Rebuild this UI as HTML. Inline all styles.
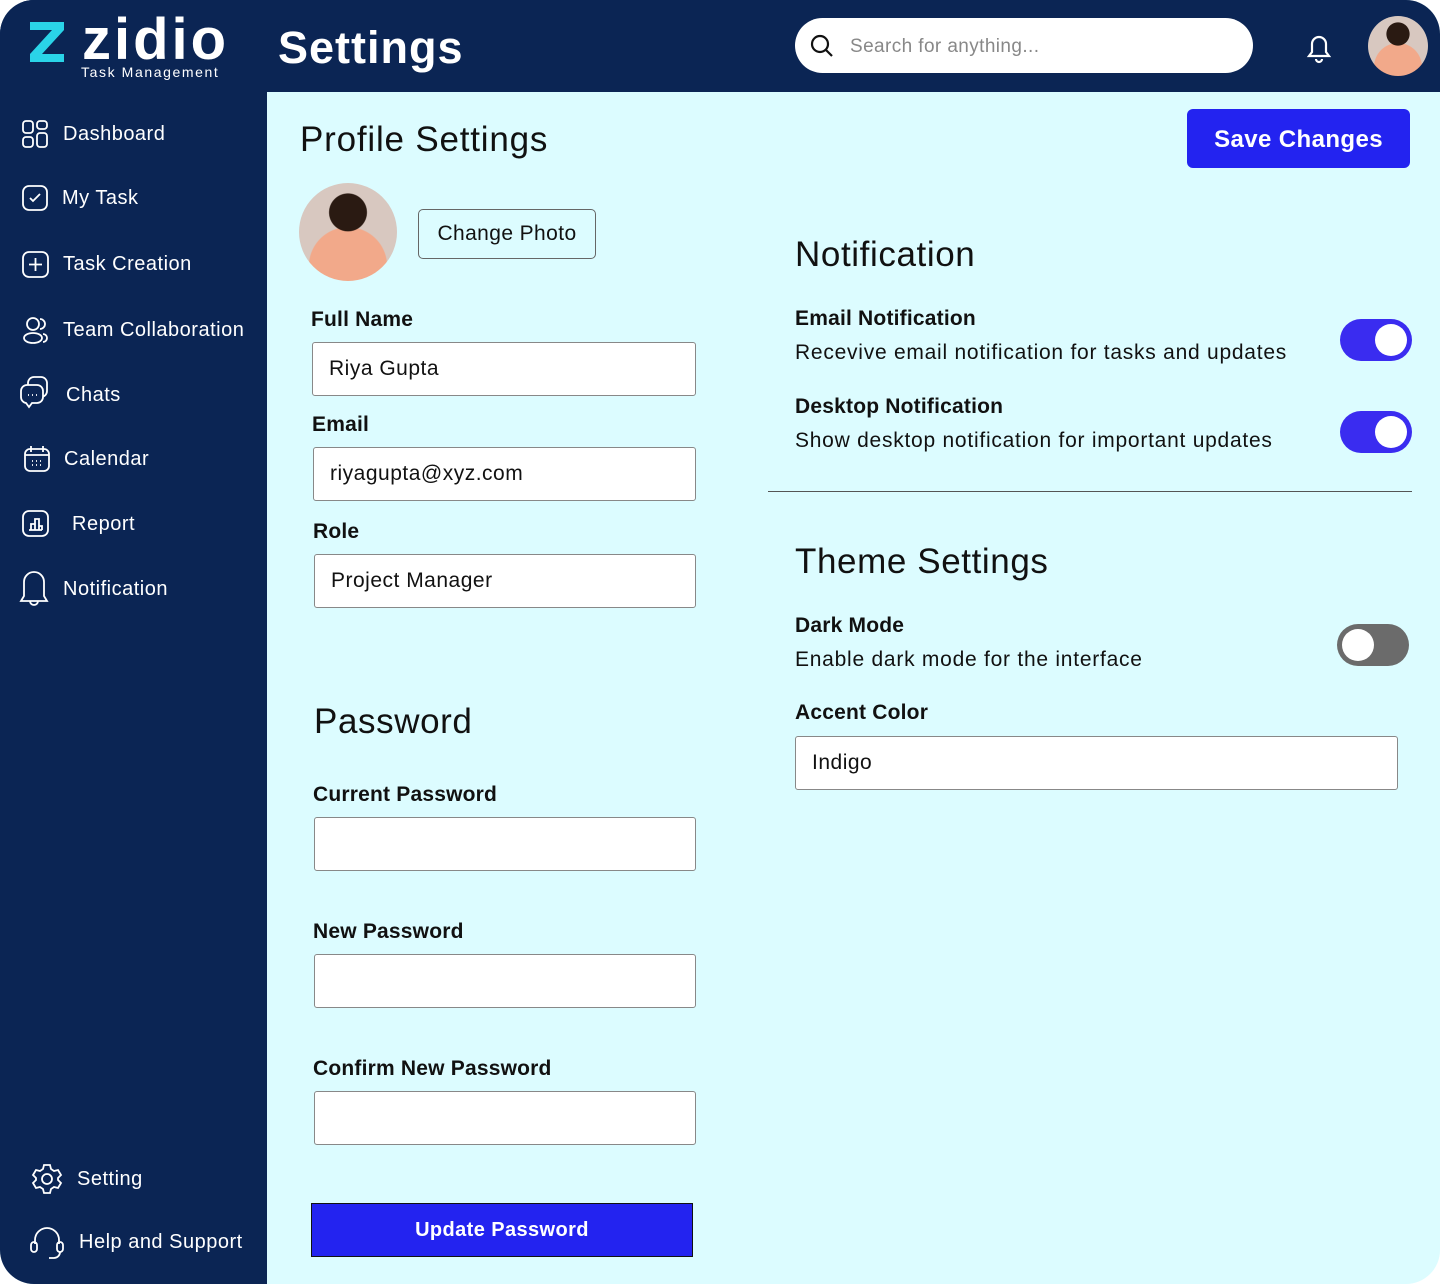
<!DOCTYPE html>
<html><head><style>
*{box-sizing:border-box;margin:0;padding:0}
body{width:1440px;height:1284px;background:#fff;font-family:"Liberation Sans",sans-serif;overflow:hidden;letter-spacing:0.4px}
.frame{position:absolute;left:0;top:0;width:1440px;height:1284px;border-radius:34px;overflow:hidden;background:#dcfcff}
.top{position:absolute;left:0;top:0;width:1440px;height:92px;background:#0b2554}
.side{position:absolute;left:0;top:0;width:267px;height:1284px;background:#0b2554}
.nav{position:absolute;color:#fff;font-size:20px;display:flex;align-items:center;letter-spacing:0.5px}
.nav svg{margin-right:14px}
.abs{position:absolute}
.lbl{position:absolute;font-size:21px;font-weight:bold;color:#111;letter-spacing:0.2px}
.inp{position:absolute;background:#fff;border:1px solid #888;border-radius:3px;font-size:21px;color:#111;padding-left:16px;display:flex;align-items:center;letter-spacing:0.5px}
h2{position:absolute;font-weight:normal;font-size:35px;color:#111;letter-spacing:0.6px}
.tog{position:absolute;width:72px;height:42px;border-radius:21px;background:#3a2cf0}
.tog::after{content:"";position:absolute;top:5px;right:5px;width:32px;height:32px;border-radius:50%;background:#fff}
.tog.off{background:#6b6b6b}
.tog.off::after{left:5px;right:auto}
.txt{position:absolute;font-size:21px;color:#111;letter-spacing:0.75px}
.av{border-radius:50%;background:radial-gradient(circle at 50% 30%,#2a1a12 0 22%,transparent 23%),radial-gradient(circle at 50% 85%,#f2a98a 0 40%,transparent 41%),#d8c8c0}
</style></head><body>
<div class="frame">
<div class="top"></div>
<div class="side"></div>
<svg class="abs" style="left:28px;top:20px" width="38" height="42" viewBox="0 0 38 42"><path d="M2 2h34v8L14 34h22v8H2v-8l22-24H2z" fill="#2ad4e8"/></svg>
<div class="abs" style="left:82px;top:6px;color:#fff;font-size:58px;font-weight:bold;letter-spacing:3px">zidio</div>
<div class="abs" style="left:81px;top:64px;color:#fff;font-size:14px;letter-spacing:1.6px">Task Management</div>
<div class="abs" style="left:278px;top:22px;color:#fff;font-size:45px;font-weight:bold;letter-spacing:1px">Settings</div>
<div class="abs" style="left:795px;top:18px;width:458px;height:55px;background:#fff;border-radius:28px"></div>
<svg class="abs" style="left:809px;top:33px" width="26" height="26" viewBox="0 0 26 26"><circle cx="11" cy="11" r="8" fill="none" stroke="#111" stroke-width="2.2"/><path d="M17 17l6 6" stroke="#111" stroke-width="2.2"/></svg>
<div class="abs" style="left:850px;top:36px;color:#888;font-size:19px">Search for anything...</div>
<svg class="abs" style="left:1305px;top:31px" width="28" height="34" viewBox="0 0 28 34"><path d="M4 25h20l-3-4V13a7 7 0 0 0-14 0v8z M11 28a3 3 0 0 0 6 0" fill="none" stroke="#fff" stroke-width="2.2"/></svg>
<div class="abs av" style="left:1368px;top:16px;width:60px;height:60px"></div>

<div class="nav" style="left:22px;top:120px"><svg width="27" height="29" viewBox="0 0 27 29" fill="none" stroke="#fff" stroke-width="1.8"><rect x="1" y="1" width="10" height="12" rx="3"/><rect x="15" y="1" width="10" height="8" rx="3"/><rect x="1" y="17" width="10" height="10" rx="3"/><rect x="15" y="13" width="10" height="14" rx="3"/></svg>Dashboard</div>
<div class="nav" style="left:22px;top:185px"><svg width="26" height="26" viewBox="0 0 26 26" fill="none" stroke="#fff" stroke-width="1.8"><rect x="1" y="1" width="24" height="24" rx="6"/><path d="M8 13l3 3 7-7"/></svg>My Task</div>
<div class="nav" style="left:22px;top:251px"><svg width="27" height="27" viewBox="0 0 27 27" fill="none" stroke="#fff" stroke-width="1.8"><rect x="1" y="1" width="25" height="25" rx="6"/><path d="M13.5 7v13M7 13.5h13"/></svg>Task Creation</div>
<div class="nav" style="left:23px;top:316px"><svg width="26" height="28" viewBox="0 0 26 28" fill="none" stroke="#fff" stroke-width="1.8"><circle cx="10" cy="8" r="6"/><ellipse cx="10" cy="22" rx="9" ry="5"/><path d="M17 3a5 5 0 0 1 0 10M20 18a4 4 0 0 1 0 8"/></svg>Team Collaboration</div>
<div class="nav" style="left:20px;top:376px"><svg width="32" height="38" viewBox="0 0 32 38" fill="none" stroke="#fff" stroke-width="1.8"><rect x="8" y="1" width="19" height="20" rx="6"/><path d="M7 9h10a6 6 0 0 1 6 6v6a6 6 0 0 1-6 6h-5l-3 4-3-4a6 6 0 0 1-5-6v-6a6 6 0 0 1 6-6z" fill="#0b2554"/><path d="M8 19h1M12 19h1M16 19h1"/></svg>Chats</div>
<div class="nav" style="left:24px;top:445px"><svg width="26" height="28" viewBox="0 0 26 28" fill="none" stroke="#fff" stroke-width="1.8"><rect x="1" y="4" width="24" height="22" rx="5"/><path d="M1 10h24M7 1v6M19 1v6M8 16h1M12 16h1M16 16h1M8 20h1M12 20h1M16 20h1"/></svg>Calendar</div>
<div class="nav" style="left:22px;top:510px"><svg width="28" height="28" viewBox="0 0 28 28" fill="none" stroke="#fff" stroke-width="1.8"><rect x="1" y="1" width="25" height="25" rx="6"/><path d="M7 20h13M9 20v-6h4v6M13 20V9h4v11M17 20v-4h3v4"/></svg><span style="margin-left:8px">Report</span></div>
<div class="nav" style="left:19px;top:568px"><svg width="30" height="42" viewBox="0 0 30 42" fill="none" stroke="#fff" stroke-width="1.8"><path d="M2 33h26l-3-5V14a10 10 0 0 0-20 0v14z M11 33a4 4 0 0 0 8 0"/></svg>Notification</div>
<div class="nav" style="left:31px;top:1163px"><svg width="32" height="32" viewBox="0 0 32 32" fill="none" stroke="#fff" stroke-width="1.8"><path d="M13 2h6l1 4 3 2 4-1 3 5-3 3v2l3 3-3 5-4-1-3 2-1 4h-6l-1-4-3-2-4 1-3-5 3-3v-2L2 12l3-5 4 1 3-2z"/><circle cx="16" cy="16" r="5"/></svg>Setting</div>
<div class="nav" style="left:29px;top:1224px"><svg width="36" height="36" viewBox="0 0 36 36" fill="none" stroke="#fff" stroke-width="1.8"><path d="M6 20v-4a12 12 0 0 1 24 0v4"/><rect x="2" y="18" width="6" height="10" rx="3"/><rect x="28" y="18" width="6" height="10" rx="3"/><path d="M31 28a6 6 0 0 1-6 6h-5"/></svg>Help and Support</div>

<div class="abs" style="left:300px;top:120px;font-size:35px;color:#111;letter-spacing:0.8px">Profile Settings</div>
<div class="abs" style="left:1187px;top:109px;width:223px;height:59px;background:#2323f0;border-radius:6px;color:#fff;font-size:24px;font-weight:bold;display:flex;align-items:center;justify-content:center;padding-top:3px">Save Changes</div>
<div class="abs av" style="left:299px;top:183px;width:98px;height:98px"></div>
<div class="abs" style="left:418px;top:209px;width:178px;height:50px;border:1px solid #666;border-radius:5px;font-size:21px;display:flex;align-items:center;justify-content:center;color:#111">Change Photo</div>

<div class="lbl" style="left:311px;top:308px">Full Name</div>
<div class="inp" style="left:312px;top:342px;width:384px;height:54px">Riya Gupta</div>
<div class="lbl" style="left:312px;top:413px">Email</div>
<div class="inp" style="left:313px;top:447px;width:383px;height:54px">riyagupta@xyz.com</div>
<div class="lbl" style="left:313px;top:520px">Role</div>
<div class="inp" style="left:314px;top:554px;width:382px;height:54px">Project Manager</div>

<h2 style="left:314px;top:702px">Password</h2>
<div class="lbl" style="left:313px;top:783px">Current Password</div>
<div class="inp" style="left:314px;top:817px;width:382px;height:54px"></div>
<div class="lbl" style="left:313px;top:920px">New Password</div>
<div class="inp" style="left:314px;top:954px;width:382px;height:54px"></div>
<div class="lbl" style="left:313px;top:1057px">Confirm New Password</div>
<div class="inp" style="left:314px;top:1091px;width:382px;height:54px"></div>
<div class="abs" style="left:311px;top:1203px;width:382px;height:54px;background:#2323f0;border:1px solid #111;color:#fff;font-size:20px;font-weight:bold;display:flex;align-items:center;justify-content:center">Update Password</div>

<h2 style="left:795px;top:235px">Notification</h2>
<div class="lbl" style="left:795px;top:307px">Email Notification</div>
<div class="txt" style="left:795px;top:341px">Recevive email notification for tasks and updates</div>
<div class="tog" style="left:1340px;top:319px"></div>
<div class="lbl" style="left:795px;top:395px">Desktop Notification</div>
<div class="txt" style="left:795px;top:429px">Show desktop notification for important updates</div>
<div class="tog" style="left:1340px;top:411px"></div>
<div class="abs" style="left:768px;top:491px;width:644px;height:1px;background:#555"></div>
<h2 style="left:795px;top:542px">Theme Settings</h2>
<div class="lbl" style="left:795px;top:614px">Dark Mode</div>
<div class="txt" style="left:795px;top:648px">Enable dark mode for the interface</div>
<div class="tog off" style="left:1337px;top:624px"></div>
<div class="lbl" style="left:795px;top:701px">Accent Color</div>
<div class="inp" style="left:795px;top:736px;width:603px;height:54px">Indigo</div>
</div>
</body></html>
